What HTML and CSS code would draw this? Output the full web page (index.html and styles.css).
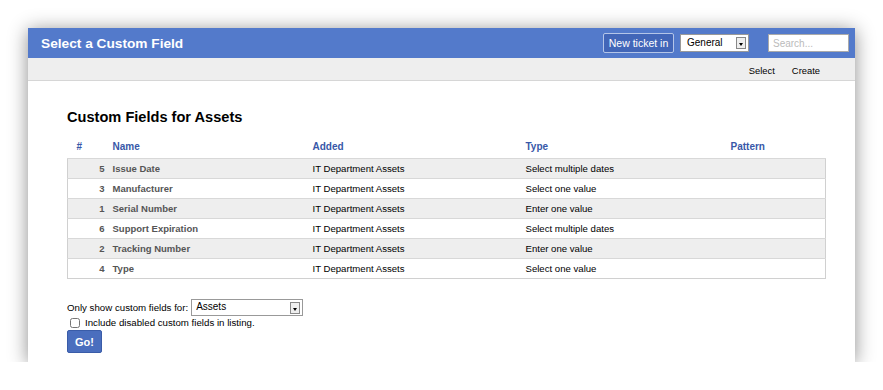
FILE: index.html
```html
<!DOCTYPE html>
<html lang="en">
<head>
    <meta charset="UTF-8">
    <title>Select a Custom Field</title>
    <link rel="stylesheet" href="styles.css">
</head>
<body>
    <div class="window">
        <div class="header">
            <h1>Select a Custom Field</h1>
            <div class="header-tools">
                <button class="new-ticket">New ticket in</button>
                <div class="fake-select queue-select"><span>General</span><i class="arrow"></i></div>
                <input class="search" type="text" placeholder="Search...">
            </div>
        </div>
        <div class="page-menu">
            <a href="#">Select</a>
            <a href="#">Create</a>
        </div>

        <div class="content">
            <h2>Custom Fields for Assets</h2>
            <table class="fields">
                <thead>
                    <tr>
                        <th class="col-id">#</th>
                        <th class="col-name">Name</th>
                        <th class="col-added">Added</th>
                        <th class="col-type">Type</th>
                        <th class="col-pattern">Pattern</th>
                    </tr>
                </thead>
                <tbody>
                    <tr class="odd"><td class="num">5</td><td class="name">Issue Date</td><td>IT Department Assets</td><td>Select multiple dates</td><td></td></tr>
                    <tr><td class="num">3</td><td class="name">Manufacturer</td><td>IT Department Assets</td><td>Select one value</td><td></td></tr>
                    <tr class="odd"><td class="num">1</td><td class="name">Serial Number</td><td>IT Department Assets</td><td>Enter one value</td><td></td></tr>
                    <tr><td class="num">6</td><td class="name">Support Expiration</td><td>IT Department Assets</td><td>Select multiple dates</td><td></td></tr>
                    <tr class="odd"><td class="num">2</td><td class="name">Tracking Number</td><td>IT Department Assets</td><td>Enter one value</td><td></td></tr>
                    <tr><td class="num">4</td><td class="name">Type</td><td>IT Department Assets</td><td>Select one value</td><td></td></tr>
                </tbody>
            </table>

            <div class="filter">
                <div class="filter-row">
                    <span>Only show custom fields for:</span>
                    <div class="fake-select type-select"><span>Assets</span><i class="arrow"></i></div>
                </div>
                <label class="check-row"><input type="checkbox"> Include disabled custom fields in listing.</label>
                <button class="go-btn">Go!</button>
            </div>
        </div>
    </div>
</body>
</html>
```

FILE: styles.css
```css
body {
    margin: 0;
    background: #fff;
    font-family: "Liberation Sans", Arial, sans-serif;
    font-size: 11px;
    color: #000;
}
.window {
    margin: 28px 0 0 28px;
    width: 827px;
    height: 334px;
    background: #fff;
    box-shadow: 0 2px 18px rgba(0, 0, 0, 0.45);
}
.header {
    height: 30px;
    background: #537acb;
    display: flex;
    align-items: center;
    justify-content: space-between;
    padding: 0 6px 0 13px;
}
.header h1 {
    margin: 0;
    color: #fff;
    font-size: 13.7px;
    font-weight: bold;
}
.header-tools {
    display: flex;
    align-items: center;
    gap: 6px;
}
.new-ticket {
    width: 71px;
    height: 20px;
    padding: 0;
    background: #4266b8;
    color: #fff;
    font-family: inherit;
    font-size: 10.5px;
    border: 1px solid #b4c5e8;
    border-radius: 2px;
}
.fake-select {
    position: relative;
    background: #fff;
    border: 1px solid #999;
    box-sizing: border-box;
    height: 18px;
    padding: 2px 0 0 6px;
    font-size: 10px;
}
.queue-select {
    width: 69px;
    margin-right: 13px;
}
.arrow {
    position: absolute;
    right: 2px;
    top: 2px;
    width: 10px;
    height: 12px;
    background: #eee;
    border: 1px solid #888;
    box-sizing: border-box;
}
.arrow::after {
    content: "";
    position: absolute;
    left: 2px;
    top: 5px;
    border-left: 2px solid transparent;
    border-right: 2px solid transparent;
    border-top: 3px solid #000;
}
.search {
    width: 81px;
    height: 18px;
    box-sizing: border-box;
    border: 1px solid #aaa;
    padding: 0 4px;
    font-family: inherit;
    font-size: 10px;
}
.search::placeholder {
    color: #bbb;
}
.page-menu {
    height: 23px;
    box-sizing: border-box;
    padding: 3px 35px 0 0;
    background: #eee;
    border-bottom: 1px solid #d6d6d6;
    display: flex;
    justify-content: flex-end;
    align-items: center;
    gap: 17px;
    font-size: 9.4px;
}
.page-menu a {
    color: #000;
    text-decoration: none;
}
.content {
    padding: 28px 29px 0 39px;
}
.content h2 {
    margin: 0 0 16px 0;
    font-size: 14.6px;
    font-weight: bold;
}
.fields {
    width: 759px;
    border-collapse: collapse;
}
.fields th {
    text-align: left;
    color: #3858a8;
    font-size: 10px;
    font-weight: bold;
    padding: 0 0 6px 0;
    height: 11px;
}
.fields th.col-id {
    width: 36px;
    padding-left: 9px;
}
.col-name { width: 200px; }
.col-added { width: 213px; }
.col-type { width: 205px; }
.fields tbody {
    border: 1px solid #d0d0d0;
}
.fields td {
    height: 19px;
    padding: 0;
    border-top: 1px solid #d8d8d8;
    font-size: 9.6px;
}
.fields tr.odd td {
    background: #eee;
}
.fields td.num {
    text-align: right;
    padding-right: 8px;
    color: #555;
    font-weight: bold;
    font-size: 9.5px;
}
.fields td.name {
    color: #555;
    font-weight: bold;
    font-size: 9.5px;
}
.filter {
    margin-top: 20px;
    font-size: 9.7px;
}
.filter-row {
    display: flex;
    align-items: center;
    gap: 3px;
}
.type-select {
    width: 112px;
    height: 17px;
    padding: 1px 0 0 4px;
    font-size: 10px;
}
.check-row {
    display: flex;
    align-items: center;
    gap: 5px;
    margin: 1px 0 0 3px;
}
.check-row input {
    margin: 0;
    width: 10px;
    height: 10px;
}
.go-btn {
    margin-top: 2px;
    width: 35px;
    height: 23px;
    background: #4a6ebe;
    border: 1px solid #3a5ca8;
    border-radius: 2px;
    color: #fff;
    font-family: inherit;
    font-size: 11px;
    font-weight: bold;
}
```
